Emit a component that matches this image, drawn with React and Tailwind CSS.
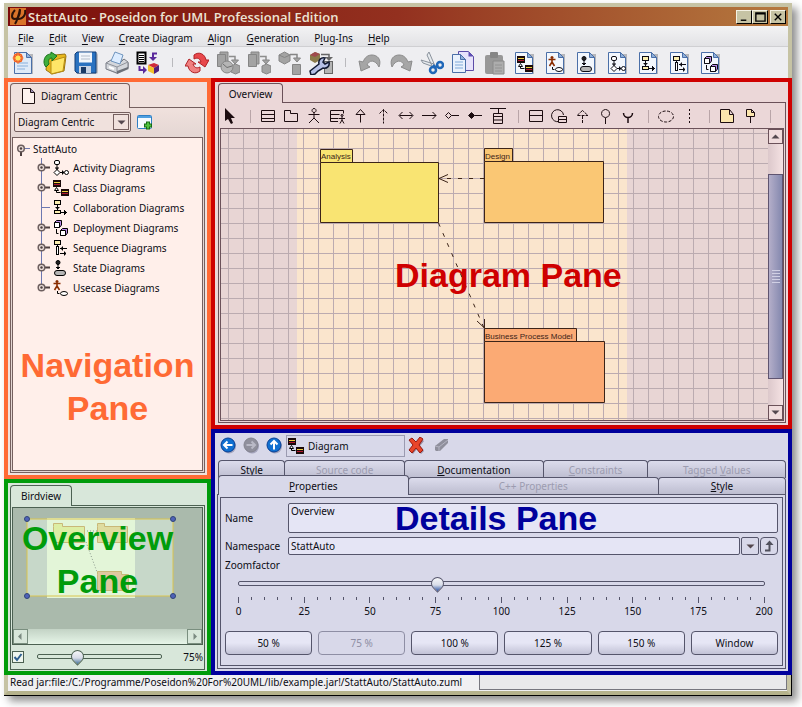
import { useState } from 'react';

/* ---------- small diagram glyphs, 16 x 16 ---------- */

function ActivityGlyph() {
  return (
    <g fill="none" stroke="currentColor">
      <rect x="1.5" y="0.5" width="5" height="4" rx="1.5" fill="white" />
      <path d="M4 5v5M2 8h4M3 9h2" />
      <path d="M4 9.5L7 12.5L4 15.5L1 12.5Z" fill="white" />
      <path d="M7 12.5h4M9.5 10.5v4M10.5 11.5v2" />
      <circle cx="13.5" cy="12.5" r="2" fill="white" />
    </g>
  );
}

function ClassGlyph() {
  return (
    <g>
      <rect x="0" y="0" width="8" height="7" fill="#1a0a0a" />
      <path d="M1 2.5h6" stroke="#f0d040" />
      <path d="M1 4.5h6" stroke="#b01830" />
      <rect x="8" y="9" width="8" height="7" fill="#1a0a0a" />
      <path d="M9 11.5h6" stroke="#f0d040" />
      <path d="M9 13.5h6" stroke="#b01830" />
      <path d="M3.5 7.5L1.5 10.5h4Z" fill="white" stroke="currentColor" />
      <path d="M3.5 10.5v2h4" fill="none" stroke="currentColor" />
    </g>
  );
}

function CollaborationGlyph() {
  return (
    <g fill="none" stroke="currentColor">
      <rect x="1.5" y="0.5" width="6" height="4" fill="#fbeeb0" />
      <path d="M4.5 5v5M2.5 7.5h4M3.5 8.5h2" />
      <rect x="1.5" y="10.5" width="6" height="3" fill="#fbeeb0" />
      <path d="M8 12.5h6M11.5 10v5M12.5 11v3" />
    </g>
  );
}

function DeploymentGlyph() {
  return (
    <g stroke="currentColor" strokeLinejoin="round">
      <path d="M1.5 2.5L3.5 0.5H8.5V5L6.5 7.5H1.5Z" fill="#b98ae8" />
      <rect x="1.5" y="2.5" width="5" height="5" fill="white" />
      <path d="M3.5 9v4.5h2" fill="none" />
      <path d="M7.5 10.5L9.5 8.5H14.5V13L12.5 15.5H7.5Z" fill="#b98ae8" />
      <rect x="7.5" y="10.5" width="5" height="5" fill="white" />
    </g>
  );
}

function SequenceGlyph() {
  return (
    <g fill="none" stroke="currentColor">
      <rect x="1.5" y="0.5" width="6" height="4" fill="#fbeeb0" />
      <path d="M4.5 5v2" />
      <rect x="3.5" y="6.5" width="2" height="8" fill="white" />
      <path d="M7 8.5h7M9.5 6.5v4M8.5 7.5v2" />
      <path d="M7 13.5h6M11.5 11.5v4M12.5 12.5v2" />
    </g>
  );
}

function StateGlyph() {
  return (
    <g fill="none" stroke="currentColor">
      <circle cx="5" cy="2.5" r="2" fill="#222" />
      <path d="M5 4v5M3 7.5h4M4 8.5h2" />
      <rect x="1.5" y="10.5" width="11" height="5" rx="2.5" fill="#b5b5b5" />
    </g>
  );
}

function UsecaseGlyph() {
  return (
    <g fill="none">
      <circle cx="4" cy="1.5" r="1.5" fill="#8a2c00" />
      <path d="M0.5 3.5h7M4 3v4M4 6L1.5 10M4 6L6.5 10" stroke="#8a2c00" strokeWidth="1.6" />
      <path d="M4.5 11v2.5h2" stroke="currentColor" />
      <ellipse cx="11" cy="13.5" rx="3.5" ry="2" fill="white" stroke="currentColor" />
    </g>
  );
}

function Glyph({ of: Shape }) {
  return (
    <svg width="16" height="16" viewBox="0 0 16 16" className="shrink-0 text-black" aria-hidden="true">
      <Shape />
    </svg>
  );
}

/* ---------- main toolbar icons, 24 x 24 ---------- */

function DiagramPage({ shape: Shape }) {
  return (
    <g>
      <path d="M4 3h17v20H4z" fill="#8f9197" opacity="0.6" />
      <path d="M2.5 1.5h12l5 5v16h-17Z" fill="#f3f7fd" stroke="#4a6fa8" />
      <path d="M14.5 1.5v5h5Z" fill="#8fb0da" stroke="#4a6fa8" />
      <g transform="translate(4 5)"><Shape /></g>
    </g>
  );
}

function NewIcon() {
  return (
    <g>
      <path d="M4 3h17v20H4z" fill="#8f9197" opacity="0.6" />
      <path d="M2.5 1.5h12l5 5v16h-17Z" fill="#dfeaf8" stroke="#4a6fa8" />
      <path d="M5 12h11M5 15h11M5 18h8" stroke="#b4cdea" strokeWidth="2" />
      <path d="M14.5 1.5v5h5Z" fill="#8fb0da" stroke="#4a6fa8" />
      <circle cx="6" cy="7" r="5" fill="#ef5a28" />
      <path d="M6 1v12M0.5 7h11M2 3l8 8M10 3l-8 8" stroke="#f58b3c" />
      <circle cx="6" cy="7" r="2.6" fill="#ffe45c" />
    </g>
  );
}

function OpenIcon() {
  return (
    <g>
      <path d="M4 8l8-4 10-1 1 2-2 15-12 3-6-4Z" fill="#e9b91e" stroke="#9a7410" />
      <path d="M8 10l14-4-2 14-12 3Z" fill="#ffe668" stroke="#b78d14" />
      <path d="M1 11C1 6 4 3 8 3V1l6 4-5 5V7C6 7 5 9 6 13l-3 3C2 15 1 13 1 11Z" fill="#3fae3c" stroke="#17721c" />
    </g>
  );
}

function SaveIcon() {
  return (
    <g>
      <rect x="2" y="2" width="22" height="21" rx="2" fill="#8f9197" opacity="0.5" />
      <path d="M1 3l2-2h19v21H3l-2-2Z" fill="#2a72c0" stroke="#123e78" />
      <rect x="5" y="1.5" width="13" height="10" fill="#f2f6fb" />
      <path d="M7 5h9M7 8h9" stroke="#b4bdca" />
      <rect x="5" y="15" width="12" height="7" fill="#c9d4e4" />
      <rect x="7" y="16" width="5" height="6" fill="#1a3a66" />
    </g>
  );
}

function PrintIcon() {
  return (
    <g>
      <path d="M3 13l14-5 7 4v6l-12 5-9-4Z" fill="#7f8289" opacity="0.6" />
      <path d="M1 12l5-3 9 3 4-4 4 3v6l-11 5L1 18Z" fill="#d4d7dc" stroke="#777b84" />
      <path d="M6 10l4-9 8 3-3 9Z" fill="#dcecff" stroke="#6f94bd" />
      <path d="M1 12l11 4 11-5M12 16v6" fill="none" stroke="#8e929a" />
      <path d="M12 20l11-4v2l-11 5Z" fill="#6c7078" />
      <path d="M4 16l5 2" stroke="#fff" strokeWidth="2" />
    </g>
  );
}

function ImportIcon() {
  return (
    <g>
      <rect x="1.5" y="1.5" width="8" height="11" fill="white" stroke="black" strokeWidth="2" />
      <path d="M3 4.5h5M3 6.5h5M3 8.5h5M3 10.5h5" stroke="black" />
      <path d="M21 2.5h-4v4" fill="none" stroke="#5a2a9c" strokeWidth="2" />
      <path d="M13 6l4 4 4-4Z" fill="#5a2a9c" />
      <path d="M3.5 15v4h4" fill="none" stroke="#5a2a9c" strokeWidth="2" />
      <path d="M7 15l4 4-4 4Z" fill="#5a2a9c" />
      <path d="M12 14l6-2 5 2-5 3Z" fill="#cf2a3a" />
      <path d="M12 14l6 3v6l-6-3Z" fill="#f3c12a" />
      <path d="M23 14l-5 3v6l5-3Z" fill="#50207c" />
    </g>
  );
}

function RefreshIcon() {
  return (
    <g stroke="#b02226" strokeLinejoin="round">
      <path d="M9 4C14 0 20 3 21 9h3l-4 7-7-5h3C15 8 13 6 9 8Z" fill="#e8484c" />
      <path d="M15 20C10 24 4 21 3 15H0l4-7 7 5H8c1 3 3 5 7 3Z" fill="#f08080" />
    </g>
  );
}

function GrayJobIcon({ clock }) {
  return (
    <g fill="#a3a3a3" stroke="#858585">
      <path d="M1.5 3.5h8v12h-8ZM4 3v-2h8v12h-2" />
      <path d="M13 5.5h6v5" fill="none" stroke="#8d8d8d" strokeWidth="1.5" />
      <path d="M15.5 9h7l-3.5 4Z" />
      <path d="M15 15l4.5-2 4.5 2v6l-4.5 2-4.5-2Z" />
      {clock && <circle cx="11" cy="16" r="6" fill="#b5b5b5" />}
      {clock && <path d="M7 13l4 3.5 5-1.500" fill="none" stroke="#6f6f6f" />}
    </g>
  );
}

function GrayCubeIcon() {
  return (
    <g fill="#a3a3a3" stroke="#858585">
      <path d="M1 4l5.5-3L12 4v6l-5.5 3L1 10Z" />
      <path d="M1 4l5.5 2.5L12 4" fill="none" />
      <path d="M12 3.5h7v5" fill="none" strokeWidth="1.5" />
      <path d="M15.5 7h7l-3.5 4Z" />
      <path d="M14.5 13.5h8v10h-8Z" />
    </g>
  );
}

function WrenchIcon() {
  return (
    <g>
      <path d="M1 4l5-3 5 2v6l-5 3-5-3Z" fill="#8a7a4a" />
      <path d="M1 4l5-3 5 2-5 3Z" fill="#a04a4e" />
      <path d="M12 3.5h8v4" fill="none" stroke="#666" strokeWidth="1.5" />
      <path d="M16 6h8l-4 4Z" fill="#666" />
      <rect x="15.5" y="10.5" width="8" height="12" fill="#b5b5b5" stroke="#666" />
      <path d="M1 20l9-7c-1-4 2-7 6-6l-2 4 2 2 4-2c1 4-2 7-6 6l-5 3-3 3-4 1Z" fill="#b6c0e6" stroke="#101830" strokeWidth="1.5" />
    </g>
  );
}

function UndoIcon() {
  return <path d="M1 10l2 10 9-4-3-2c2-5 8-6 12 2C24 8 19 4 14 4 10 4 7 6 5 11Z" fill="#a6a6a6" stroke="#8b8b8b" />;
}

function RedoIcon() {
  return <path d="M23 10l-2 10-9-4 3-2C13 9 7 8 3 16 0 8 5 4 10 4c4 0 7 2 9 7Z" fill="#a6a6a6" stroke="#8b8b8b" />;
}

function ScissorsIcon() {
  return (
    <g>
      <path d="M9 1l6 14-2 2L7 4ZM1 9l13 4v3L3 12Z" fill="#e6eaee" stroke="#8a929c" />
      <circle cx="13" cy="19" r="3" fill="none" stroke="#1f67b8" strokeWidth="2.5" />
      <circle cx="20" cy="14" r="3" fill="none" stroke="#1f67b8" strokeWidth="2.5" />
      <path d="M13 14l3 2 2-2" stroke="#1f67b8" strokeWidth="2" fill="none" />
    </g>
  );
}

function CopyIcon() {
  return (
    <g>
      <path d="M7.5 0.5h10l5 5v14h-15Z" fill="#e7e3fb" stroke="#5c4ca8" />
      <path d="M17.5 0.5v5h5Z" fill="#5f50b4" />
      <path d="M1.5 3.5h8l5 5v13h-13Z" fill="#e9f1fc" stroke="#4a6fa8" />
      <path d="M9.5 3.5v5h5Z" fill="#8fb0da" stroke="#4a6fa8" />
      <path d="M4 11h8M4 14h8M4 17h8" stroke="#b4cdea" strokeWidth="2" />
    </g>
  );
}

function PasteIcon() {
  return (
    <g>
      <rect x="3" y="4" width="18" height="19" rx="2" fill="#989898" />
      <rect x="8" y="1" width="8" height="6" rx="1" fill="#868686" />
      <path d="M11 10h11v13H11Z" fill="#adadad" stroke="#8a8a8a" />
      <path d="M13 14h7M13 17h7M13 20h7" stroke="#929292" />
    </g>
  );
}

const GrayClockIcon = () => <GrayJobIcon clock />;
const ClassPage = () => <DiagramPage shape={ClassGlyph} />;
const UsecasePage = () => <DiagramPage shape={UsecaseGlyph} />;
const StatePage = () => <DiagramPage shape={StateGlyph} />;
const ActivityPage = () => <DiagramPage shape={ActivityGlyph} />;
const CollaborationPage = () => <DiagramPage shape={CollaborationGlyph} />;
const SequencePage = () => <DiagramPage shape={SequenceGlyph} />;
const DeploymentPage = () => <DiagramPage shape={DeploymentGlyph} />;

const mainTools = [
  ['New', NewIcon], ['Open', OpenIcon], ['Save', SaveIcon], ['Print', PrintIcon], ['Import', ImportIcon],
  null,
  ['Refresh', RefreshIcon], ['Schedule', GrayClockIcon], ['Generate', GrayJobIcon], ['Reverse', GrayCubeIcon], ['Settings', WrenchIcon],
  null,
  ['Undo', UndoIcon], ['Redo', RedoIcon], ['Cut', ScissorsIcon], ['Copy', CopyIcon], ['Paste', PasteIcon],
  ['Class diagram', ClassPage], ['Use case diagram', UsecasePage], ['State diagram', StatePage], ['Activity diagram', ActivityPage],
  ['Collaboration diagram', CollaborationPage], ['Sequence diagram', SequencePage], ['Deployment diagram', DeploymentPage],
];

/* ---------- drawing palette, 16 x 16 line icons ---------- */

const palette = [
  ['Select', <path d="M3 0v13l3-2 3 5 2-1-2-5h4Z" fill="currentColor" stroke="none" />],
  null,
  ['Class', <path d="M1.5 2.5h13v11h-13ZM1.5 6.5h13M1.5 10.5h13" />],
  ['Package', <path d="M1.5 2.5h6v3h7v8h-13Z" />],
  ['Actor', <path d="M8 4.5v6M2.5 6.5h11M8 10l-5 5M8 10l5 5M8 0.5a2 2 0 1 0 0.1 0Z" />],
  ['Actor class', <path d="M9 13.5H1.5v-11h13v3M1.5 6.5h9M1.5 10.5h8M13 8.5v4M10 10.5h6M13 12l-2 3.5M13 12l2 3.5M13 6.5a1 1 0 1 0 0.1 0Z" />],
  ['Generalization', <path d="M8.5 7v7.5M8.5 1.5L4 6.5h9Z" />],
  ['Dependency', <path d="M8.5 1.5v14M4.5 5.5l4-4 4 4" strokeDasharray="3 1" />],
  ['Association', <path d="M1.5 7.5h13M4.5 4L1 7.5l3.5 3.5M11.5 4L15 7.5l-3.5 3.5" />],
  ['Directed association', <path d="M1 7.5h14M11.5 4L15 7.5l-3.5 3.5" />],
  ['Aggregation', <path d="M7.5 7.5H15M1.5 7.5l3-3 3 3-3 3Z" />],
  ['Composition', <path d="M7.5 7.5H15M1.5 7.5l3-3 3 3-3 3Z" fill="currentColor" />],
  ['Association class', <path d="M0 0.5h16M8.5 1v5M3.5 5.5h9v10h-9ZM3.5 8.5h9M3.5 12h9" />],
  null,
  ['Interface', <path d="M1.5 2.5h13v11h-13ZM1.5 7.5h13" />],
  ['Interface class', <path d="M8 13.500A6 6 0 1 1 12.5 7M7.5 8.5h8v6h-8ZM7.5 11.5h8" />],
  ['Realization', <path d="M8.5 8v7M8.5 2.5L3 7.5h11Z" strokeDasharray="3 1" />],
  ['Lollipop', <path d="M8.5 10v6M8.5 1.5a4 4 0 1 0 0.1 0Z" />],
  ['Socket', <path d="M3.5 5a4.500 4.500 0 0 0 9 0M8 9.5V15" strokeWidth="1.5" />],
  null,
  ['Collaboration', <ellipse cx="8" cy="8.5" rx="7.5" ry="5.5" strokeDasharray="3 1.5" />],
  ['Lifeline', <path d="M8.5 1v14" strokeDasharray="2 2" />],
  null,
  ['Note', <path d="M1.5 1.5h9l4 5v8h-13ZM10.5 1.5v5h4" fill="#fbe6ae" />],
  ['Note link', <path d="M4.5 1.5h5l3 3v4h-8ZM9.5 1.5v3h3M8.5 9v6" fill="#fbe6ae" />],
  null,
];

/* ---------- shared bits ---------- */

function PaneLabel({ className, children }) {
  return (
    <div className={`pointer-events-none absolute text-center font-['Liberation_Sans',Arial,sans-serif] text-[34px] leading-[43px] font-bold whitespace-nowrap ${className}`}>
      {children}
    </div>
  );
}

function ArrowDown() {
  return (
    <svg width="9" height="5" viewBox="0 0 9 5" aria-hidden="true">
      <path d="M0.5 0.5h8L4.5 4.5Z" fill="#54484f" />
    </svg>
  );
}

const sliderBase =
  "m-0 h-4 cursor-pointer appearance-none bg-transparent [&::-webkit-slider-runnable-track]:h-[5px] [&::-webkit-slider-runnable-track]:rounded-xs [&::-webkit-slider-runnable-track]:border [&::-webkit-slider-thumb]:-mt-[5px] [&::-webkit-slider-thumb]:size-[13px] [&::-webkit-slider-thumb]:rotate-45 [&::-webkit-slider-thumb]:appearance-none [&::-webkit-slider-thumb]:rounded-[50%_50%_0_50%] [&::-webkit-slider-thumb]:border [&::-webkit-slider-thumb]:bg-linear-to-br [&::-webkit-slider-thumb]:from-white [&::-webkit-slider-thumb]:via-[#d8dce8] [&::-webkit-slider-thumb]:via-60%";

/* ---------- window header ---------- */

function TitleBar() {
  return (
    <div className="flex h-[19px] items-center bg-linear-to-r from-[#7b0a0a] via-[#93301f] to-[#b5793f] pl-[2px]">
      <svg width="16" height="17" viewBox="0 0 16 17" aria-hidden="true">
        <rect width="16" height="17" fill="#d9742a" />
        <path d="M5 2C1 6 1 11 5 11c3 0 5-4 5-9M10 1C9 6 8 11 5 16M15 2c1 5-2 9-7 9" fill="none" stroke="#2b1208" strokeWidth="2" />
      </svg>
      <h1 className="ml-[2px] font-['Open_Sans','Noto_Sans',sans-serif] text-[13px] leading-[18px] font-semibold whitespace-nowrap text-[#ece4d4]">
        StattAuto - Poseidon for UML Professional Edition
      </h1>
      <div className="mr-[2px] ml-auto flex">
        {[
          ['Minimize', 'M4 10h6', ''],
          ['Maximize', 'M3 2h10v9H3ZM3 3h10', ''],
          ['Close', 'M4 3l7 7M11 3l-7 7', 'ml-[2px]'],
        ].map(([label, d, gap]) => (
          <button key={label} aria-label={label} className={`h-[14px] w-4 border border-t-[#f4f2e4] border-r-black border-b-black border-l-[#f4f2e4] bg-[#c6c3a4] ${gap}`}>
            <svg width="14" height="12" viewBox="0 0 15 13" aria-hidden="true">
              <path d={d} fill="none" stroke="black" strokeWidth="1.5" />
            </svg>
          </button>
        ))}
      </div>
    </div>
  );
}

const menus = [['', 'F', 'ile'], ['', 'E', 'dit'], ['', 'V', 'iew'], ['', 'C', 'reate Diagram'], ['', 'A', 'lign'], ['', 'G', 'eneration'], ['P', 'l', 'ug-Ins'], ['', 'H', 'elp']];

function MenuBar() {
  return (
    <nav className="flex h-[21px] items-center gap-[15px] border-b border-[#cfcfd2] bg-linear-to-b from-[#f3f3f4] to-[#e2e2e5] pt-[3px] pl-[10px]">
      {menus.map(([pre, key, rest]) => (
        <button key={key + rest} className="whitespace-nowrap">
          {pre}<span className="underline underline-offset-2">{key}</span>{rest}
        </button>
      ))}
    </nav>
  );
}

function MainToolbar() {
  return (
    <div className="flex h-[31px] items-center overflow-hidden bg-[#eeeef1]">
      {mainTools.map((tool, i) => {
        if (!tool) return <span key={i} className="flex w-[18px] shrink-0 justify-center"><span className="h-[9px] w-px bg-[#b9b9bd]" /></span>;
        const [label, Icon] = tool;
        return (
          <button key={label} aria-label={label} className="flex w-[31px] shrink-0 justify-center">
            <svg width="24" height="24" viewBox="0 0 24 24" aria-hidden="true"><Icon /></svg>
          </button>
        );
      })}
    </div>
  );
}

/* ---------- navigation pane ---------- */

const treeItems = [
  ['Activity Diagrams', ActivityGlyph, true],
  ['Class Diagrams', ClassGlyph, true],
  ['Collaboration Diagrams', CollaborationGlyph, false],
  ['Deployment Diagrams', DeploymentGlyph, true],
  ['Sequence Diagrams', SequenceGlyph, true],
  ['State Diagrams', StateGlyph, true],
  ['Usecase Diagrams', UsecaseGlyph, true],
];

function TreeKnob() {
  return (
    <svg width="13" height="20" viewBox="0 0 13 20" aria-hidden="true">
      <path d="M8 9.5h5" stroke="#4d3f3f" strokeWidth="2" />
      <circle cx="4.5" cy="9.5" r="3.3" fill="#e9dcd8" stroke="#6d5f5f" strokeWidth="1.5" />
      <circle cx="4.5" cy="9.5" r="1.2" fill="#4d3f3f" />
    </svg>
  );
}

function NavigationPane() {
  return (
    <section className="relative flex flex-1 flex-col border-4 border-[#ff6a34] bg-[#f0e1dd] px-[2px] pt-px pb-[2px]">
      <div className="z-10 -mb-px flex h-[25px] w-[120px] items-center gap-[6px] rounded-t border border-b-0 border-[#75605f] bg-[#f0e1dd] pl-[11px]">
        <svg width="13" height="16" viewBox="0 0 13 16" aria-hidden="true">
          <path d="M0.5 0.5h8l4 4v11h-12Z" fill="#fdf2ee" stroke="#1c1010" />
          <path d="M8.5 0.5v4h4" fill="#9c8fb4" stroke="#1c1010" />
        </svg>
        <span className="whitespace-nowrap">Diagram Centric</span>
      </div>
      <div className="flex flex-1 flex-col border border-[#75605f] bg-linear-to-b from-[#f0e1dd] to-[#e4d6d3] to-[30px] p-px pt-1">
        <div className="mb-[5px] flex items-center gap-[6px] pl-[2px]">
          <div className="relative">
            <select aria-label="Tree view" className="h-5 w-[117px] appearance-none rounded-xs border border-[#75605f] bg-[#f0e1dd] pl-[3px]">
              <option>Diagram Centric</option>
            </select>
            <span className="pointer-events-none absolute top-[2px] right-[2px] flex h-4 w-4 items-center justify-center border border-[#75605f]"><ArrowDown /></span>
          </div>
          <button aria-label="Add view">
            <svg width="16" height="16" viewBox="0 0 16 16" aria-hidden="true">
              <rect x="0.5" y="1.5" width="14" height="13" rx="1" fill="#f4faff" stroke="#2f7fc4" />
              <rect x="1" y="2" width="13" height="2" fill="#4f9fe0" />
              <path d="M7 11.5h8M11 7.5v8" stroke="#156b16" strokeWidth="4" />
              <path d="M8 11.5h6M11 8.5v6" stroke="#4fc23e" strokeWidth="2" />
            </svg>
          </button>
        </div>
        <div className="flex-1 border border-[#75605f] bg-[#ffefea] pt-px pl-[3px]">
          <div className="flex h-[19px] items-center">
            <svg width="14" height="20" viewBox="0 0 14 20" aria-hidden="true">
              <path d="M9 9.5h5" stroke="#6d78b0" />
              <path d="M5 12v5" stroke="#4d3f3f" strokeWidth="2" />
              <circle cx="5" cy="9.5" r="3.3" fill="#e9dcd8" stroke="#6d5f5f" strokeWidth="1.5" />
              <circle cx="5" cy="9.5" r="1.2" fill="#4d3f3f" />
            </svg>
            <span className="ml-[3px]">StattAuto</span>
          </div>
          <ul className="pl-[21px]">
            {treeItems.map(([label, shape, open], i) => (
              <li key={label} className="flex h-5 items-center">
                <span className="relative mr-[3px] h-5 w-[13px]">
                  <span className={`absolute top-0 left-1 w-px bg-[#6d78b0] ${i === treeItems.length - 1 ? 'h-2' : 'h-5'}`} />
                  {open
                    ? <button aria-label={`Expand ${label}`} className="absolute inset-0"><TreeKnob /></button>
                    : <span className="absolute top-[9px] left-1 h-px w-[9px] bg-[#6d78b0]" />}
                </span>
                <Glyph of={shape} />
                <span className="ml-1 whitespace-nowrap">{label}</span>
              </li>
            ))}
          </ul>
        </div>
      </div>
      <PaneLabel className="inset-x-0 top-[262px] text-[#ff6a34]">Navigation<br />Pane</PaneLabel>
    </section>
  );
}

/* ---------- overview pane ---------- */

function OverviewPane() {
  const [zoom, setZoom] = useState(75);

  return (
    <section className="relative border-4 border-[#009c0a] bg-[#d8e7da] px-[2px] pt-[2px] pb-px">
      <div className="relative z-10 -mb-px flex h-[21px] w-[62px] items-center justify-center rounded-t border border-b-0 border-[#4c6152] bg-[#d8e7da]">Birdview</div>
      <div className="border border-[#4c6152] p-px">
        <div className="border border-[#4c6152]">
          <svg width="100%" height="121" className="block bg-[#aabaac]" aria-label="Diagram thumbnail">
            <rect x="14" y="11" width="146" height="77" fill="#c7d8c9" />
            <rect x="34" y="10" width="88" height="80" fill="#e3f5d8" />
            <g stroke="#c9b878">
              <path d="M40.5 18.5v-3h9v3h22v16h-31Z" fill="#ddeea4" />
              <path d="M84.5 18.5v-3h7v3h23v16h-30Z" fill="#dfdca0" />
              <path d="M84.5 66.5v-3h24v3h7v16h-31Z" fill="#dfc8a0" />
            </g>
            <path d="M84 23H73M73 34l11 30" stroke="#8b998c" strokeDasharray="1 2" fill="none" />
            <rect x="14" y="11" width="146" height="77" fill="none" stroke="#d9c44e" />
            <g fill="#4f62b8" stroke="#2f4478">
              <circle cx="14" cy="11" r="2.5" /><circle cx="160" cy="11" r="2.5" />
              <circle cx="14" cy="88" r="2.5" /><circle cx="160" cy="88" r="2.5" />
            </g>
          </svg>
          <div className="flex h-[15px] justify-between bg-linear-to-b from-[#c3d3c5] to-[#e6f5e8]">
            {[['Scroll left', 'M7.5 3v7L4 6.5Z'], ['Scroll right', 'M5.5 3v7L9 6.5Z']].map(([label, d]) => (
              <button key={label} aria-label={label} className="h-[15px] w-[15px] border border-[#7a8f7f] bg-[#d8e7da]">
                <svg width="13" height="13" viewBox="0 0 13 13" aria-hidden="true"><path d={d} fill="#7a8a80" /></svg>
              </button>
            ))}
          </div>
        </div>
        <div className="flex h-[23px] items-center">
          <label className="relative flex">
            <input type="checkbox" defaultChecked aria-label="Track zoom" className="peer h-3 w-3 appearance-none border border-[#4c6152] bg-[#eef6ee]" />
            <svg width="12" height="12" viewBox="0 0 12 12" className="pointer-events-none absolute inset-0 hidden peer-checked:block" aria-hidden="true">
              <path d="M2.5 6l2.5 3L9.5 3" fill="none" stroke="#2f5f8f" strokeWidth="2" />
            </svg>
          </label>
          <input type="range" min="0" max="250" value={zoom} onChange={(e) => setZoom(Number(e.target.value))} aria-label="Birdview zoom"
            className={`${sliderBase} ml-[13px] w-[125px] [&::-webkit-slider-runnable-track]:border-[#4c6152] [&::-webkit-slider-thumb]:border-[#4c6152] [&::-webkit-slider-thumb]:to-[#3d6f96]`} />
          <span className="ml-auto">{zoom}%</span>
        </div>
      </div>
      <PaneLabel className="inset-x-0 top-[34px] mr-5 text-[#009c0a]">Overview<br />Pane</PaneLabel>
    </section>
  );
}

/* ---------- diagram pane ---------- */

function DiagramCanvas() {
  return (
    <svg className="absolute inset-0 h-full w-full" aria-label="Package diagram">
      <defs>
        <pattern id="grid" x="7" y="4" width="15" height="15" patternUnits="userSpaceOnUse">
          <path d="M0.5 0v15M0 0.5h15" stroke="#bbabb0" fill="none" />
        </pattern>
      </defs>
      <rect width="100%" height="100%" fill="#e8d5d4" />
      <rect x="76" width="330" height="100%" fill="#fae5cd" />
      <rect width="100%" height="100%" fill="url(#grid)" />
      <g stroke="#3c2418">
        <path d="M99.5 33.5v-13h32v13M99.5 33.5h118v60h-118Z" fill="#f9e472" />
        <path d="M263.5 32.5v-13h28v13M263.5 32.5h119v61h-119Z" fill="#fac774" />
        <path d="M263.5 212.5v-13h92v13M263.5 212.5h120v61h-120Z" fill="#fbaa74" />
      </g>
      <g fill="none" stroke="#3c2418">
        <path d="M263 49.5H218M217.5 94L263 199" strokeDasharray="4 7" />
        <path d="M227 45.5l-9 4 9 4M256 192l7.5 7V190" />
      </g>
      <g fill="#3c2418" className="font-['Liberation_Sans',Arial,sans-serif] text-[8px]">
        <text x="100" y="30">Analysis</text>
        <text x="264" y="30">Design</text>
        <text x="264" y="210">Business Process Model</text>
      </g>
    </svg>
  );
}

function DiagramPane() {
  return (
    <section className="relative flex flex-1 flex-col border-4 border-[#cf0000] bg-[#ebd7d8] px-[2px] pt-px pb-[2px]">
      <div className="z-10 -mb-px ml-px flex h-5 w-[65px] items-center justify-center rounded-t border border-b-0 border-[#6b5159] bg-[#ebd7d8]">Overview</div>
      <div className="ml-px flex flex-1 flex-col border border-[#6b5159] p-px">
        <div className="flex h-[24px] items-center overflow-hidden">
          {palette.map((item, i) => {
            if (!item) return <span key={i} className="flex w-[15px] shrink-0 justify-center"><span className="h-[13px] w-px bg-[#b9a5a8]" /></span>;
            return (
              <button key={item[0]} aria-label={item[0]} className="flex w-[23px] shrink-0 justify-start pl-[2px]">
                <svg width="16" height="16" viewBox="0 0 16 16" fill="none" stroke="currentColor" className="text-[#1c0c10]" aria-hidden="true">{item[1]}</svg>
              </button>
            );
          })}
        </div>
        <div className="flex flex-1 border border-[#6b5159]">
          <div className="relative flex-1"><DiagramCanvas /></div>
          <div className="flex w-[15px] flex-col bg-linear-to-r from-[#dcc8cb] to-[#f5e2e3]">
            <button aria-label="Scroll up" className="flex h-[15px] items-center justify-center border border-[#6b5159] bg-[#f0dcdd]"><span className="rotate-180"><ArrowDown /></span></button>
            <div className="mt-[30px] mb-[26px] flex flex-1 flex-col items-center justify-center gap-[2px] border border-[#5f5470] bg-linear-to-r from-[#b4aec9] to-[#8488ae]">
              {[1, 2, 3, 4, 5].map((n) => <span key={n} className="h-px w-2 bg-[#d0cfe4]" />)}
            </div>
            <button aria-label="Scroll down" className="flex h-[15px] items-center justify-center border border-[#6b5159] bg-[#f0dcdd]"><ArrowDown /></button>
          </div>
        </div>
      </div>
      <PaneLabel className="top-[172px] left-[180px] text-[#cf0000]">Diagram Pane</PaneLabel>
    </section>
  );
}

/* ---------- details pane ---------- */

function RoundButton({ label, d, disabled }) {
  return (
    <button aria-label={label} disabled={disabled} className="w-[23px]">
      <svg width="17" height="17" viewBox="0 0 17 17" className="mx-auto" aria-hidden="true">
        <circle cx="9" cy="9.5" r="7" fill="#8484a0" opacity="0.6" />
        <circle cx="8" cy="8" r="7" fill={disabled ? '#8f8f9c' : '#0f6fd0'} stroke={disabled ? '#83838f' : '#073f96'} />
        <path d={d} fill="none" stroke={disabled ? '#b9b9c6' : 'white'} strokeWidth="2" />
      </svg>
    </button>
  );
}

function Tab({ className, disabled, children }) {
  return (
    <button role="tab" disabled={disabled} className={`flex items-center justify-center overflow-hidden rounded-t border border-b-0 border-[#55556b] whitespace-nowrap disabled:text-[#9c9cb0] ${className}`}>
      <span>{children}</span>
    </button>
  );
}

const idleTab = 'bg-linear-to-b from-[#dcdcec] to-[#bdbdd0]';
const field = 'min-w-0 flex-1 rounded-xs border border-[#55556b] bg-[#e5e5f5] px-[2px]';
const zoomSteps = ['50 %', '75 %', '100 %', '125 %', '150 %', 'Window'];

function DetailsPane() {
  const [zoom, setZoom] = useState(75);

  return (
    <section className="relative border-4 border-[#00009c] bg-[#d8d8e9] px-[2px] pb-[2px]">
      <div className="flex h-[27px] items-center pb-[2px]">
        <RoundButton label="Back" d="M12.5 8H4M7.5 4.5L4 8l3.5 3.5" />
        <RoundButton label="Forward" disabled d="M3.5 8H12M8.5 4.5L12 8l-3.5 3.5" />
        <RoundButton label="Up" d="M8 12.5V4M4.5 7.5L8 4l3.5 3.5" />
        <div className="flex h-[22px] w-[119px] items-center gap-[4px] border border-[#9a9ab0] pl-px">
          <Glyph of={ClassGlyph} />
          <span>Diagram</span>
        </div>
        <button aria-label="Delete" className="ml-[3px]">
          <svg width="17" height="17" viewBox="0 0 17 17" aria-hidden="true">
            <path d="M4 3l4 4 5-5 3 2-4 5 4 5-3 3-4-5-4 5-3-3 4-5-3-4Z" fill="#7d6f88" opacity="0.7" />
            <path d="M1 3l3-2 4 4 4-5 3 2-4 6 4 5-3 3-4-5-4 5-3-3 4-5Z" fill="#e8452a" stroke="#9a1a10" />
          </svg>
        </button>
        <button aria-label="Erase" disabled className="ml-[9px]">
          <svg width="15" height="15" viewBox="0 0 15 15" aria-hidden="true">
            <path d="M1 8l9-7h4v4l-8 8H2L1 12Z" fill="#8f8f9c" />
            <path d="M1 8l4 1v4M5 9l9-7" stroke="#b4b4c2" fill="none" />
          </svg>
        </button>
      </div>

      <div role="tablist" className="ml-px">
        <div className="-mb-[3px] flex">
          <Tab className={`h-[18px] flex-66 ${idleTab}`}>Style</Tab>
          <Tab disabled className={`-ml-px h-[18px] flex-120 ${idleTab}`}>Source code</Tab>
          <Tab className={`-ml-px h-[18px] flex-139 ${idleTab}`}><u>D</u>ocumentation</Tab>
          <Tab disabled className={`-ml-px h-[18px] flex-105 ${idleTab}`}><u>C</u>onstraints</Tab>
          <Tab disabled className={`-ml-px h-[18px] flex-138 ${idleTab}`}>Tagged <u>V</u>alues</Tab>
        </div>
        <div className="relative z-10 -mb-px flex items-end">
          <Tab className="h-[20px] flex-190 bg-[#d8d8e9]"><u>P</u>roperties</Tab>
          <Tab disabled className={`mb-px -ml-px h-[17px] flex-251 ${idleTab}`}>C++ Properties</Tab>
          <Tab className={`mb-px -ml-px h-[17px] flex-127 ${idleTab}`}><u>S</u>tyle</Tab>
        </div>
      </div>

      <div className="border border-[#55556b] p-[2px]">
        <div className="border border-[#55556b] px-1 pt-[5px] pb-[10px]">
          <div className="flex items-center">
            <label htmlFor="name" className="w-[63px]">Name</label>
            <textarea id="name" rows={1} defaultValue="Overview" className={`h-[30px] resize-none overflow-hidden ${field}`} />
          </div>
          <div className="mt-[4px] flex items-center">
            <label htmlFor="namespace" className="w-[63px]">Namespace</label>
            <select id="namespace" className={`h-[18px] appearance-none ${field}`}>
              <option>StattAuto</option>
            </select>
            <button aria-label="Choose namespace" className="ml-px flex h-[18px] w-[18px] items-center justify-center rounded-xs border border-[#55556b]"><ArrowDown /></button>
            <button aria-label="Go to namespace" className="ml-px flex h-[18px] w-[18px] items-center justify-center rounded-sm border border-[#55556b]">
              <svg width="10" height="12" viewBox="0 0 10 12" aria-hidden="true">
                <path d="M1 10.5h4.5V4" fill="none" stroke="#50505c" strokeWidth="2" />
                <path d="M1.5 5l4-4.5 4 4.5Z" fill="#50505c" />
              </svg>
            </button>
          </div>

          <label htmlFor="zoom" className="mt-1 block leading-3">Zoomfactor</label>
          <div className="mx-[13px] mt-[4px]">
            <input id="zoom" type="range" min="0" max="200" value={zoom} onChange={(e) => setZoom(Number(e.target.value))}
              className={`${sliderBase} block w-full [&::-webkit-slider-runnable-track]:border-[#55556b] [&::-webkit-slider-thumb]:border-[#55556b] [&::-webkit-slider-thumb]:to-[#2f52a0]`} />
            <div className="mt-[6px] flex h-5 justify-between">
              {Array.from({ length: 41 }, (_, i) => (
                <div key={i} className="flex w-px flex-col items-center justify-between">
                  <span className={`w-px bg-[#55556b] ${i % 5 === 0 ? 'h-[6px]' : 'h-[3px]'}`} />
                  {i % 5 === 0 && <span className="leading-3">{i * 5}</span>}
                </div>
              ))}
            </div>
          </div>

          <div className="mt-[14px] grid grid-cols-6 gap-[6px]">
            {zoomSteps.map((step) => (
              <button key={step} disabled={step === '75 %'}
                className="h-6 rounded-sm border border-[#55556b] bg-linear-to-b from-[#e6e6f5] from-50% to-[#c2c2d6] disabled:border-[#8e8ea4] disabled:bg-none disabled:text-[#8e8ea4]">
                {step}
              </button>
            ))}
          </div>
        </div>
      </div>
      <PaneLabel className="top-[64px] left-[180px] text-[#00009c]">Details Pane</PaneLabel>
    </section>
  );
}

export default function App() {
  return (
    <div className="flex min-h-screen flex-col bg-white pt-[3px] pr-[10px] pb-[11px] pl-1 font-['Noto_Sans','Liberation_Sans',sans-serif] text-[10px] leading-[14px] text-[#0c0c14]">
      <div className="flex flex-1 flex-col shadow-[5px_5px_8px_rgba(0,0,0,0.45)]">
        <header className="border-x-4 border-t-4 border-[#c6c3a4]">
          <TitleBar />
          <MenuBar />
          <MainToolbar />
        </header>

        <main className="flex flex-1">
          <div className="flex w-[207px] shrink-0 flex-col">
            <NavigationPane />
            <OverviewPane />
          </div>
          <div className="flex min-w-0 flex-1 flex-col">
            <DiagramPane />
            <DetailsPane />
          </div>
        </main>

        <footer className="border-r border-b border-black">
          <div className="flex h-[20px] border-x-4 border-b-4 border-x-[#c6c3a4] border-b-[#b5b28c] bg-[#f0f0f2] pl-[2px]">
            <span className="whitespace-nowrap">Read jar:file:/C:/Programme/Poseidon%20For%20UML/lib/example.jar!/StattAuto/StattAuto.zuml</span>
            <span className="ml-[17px] h-[15px] flex-1 border border-t-0 border-[#77777f] bg-[#e9e9eb]" />
          </div>
        </footer>
      </div>
    </div>
  );
}
